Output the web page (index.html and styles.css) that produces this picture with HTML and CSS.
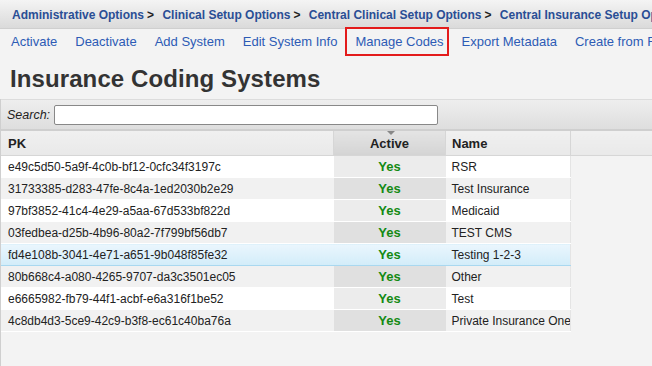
FILE: index.html
```html
<!DOCTYPE html>
<html lang="en">
<head>
    <meta charset="UTF-8">
    <title>Insurance Coding Systems</title>
    <link rel="stylesheet" href="styles.css">
</head>
<body>

    <!-- Breadcrumb -->
    <div class="crumbs">
        <a href="#">Administrative Options</a><span class="sep">&gt;</span>
        <a href="#">Clinical Setup Options</a><span class="sep">&gt;</span>
        <a href="#">Central Clinical Setup Options</a><span class="sep">&gt;</span>
        <a href="#">Central Insurance Setup Options</a>
    </div>

    <!-- Toolbar -->
    <div class="toolbar">
        <a href="#">Activate</a>
        <a href="#">Deactivate</a>
        <a href="#">Add System</a>
        <a href="#">Edit System Info</a>
        <a href="#" class="marked">Manage Codes</a>
        <a href="#">Export Metadata</a>
        <a href="#">Create from File</a>
    </div>

    <h1>Insurance Coding Systems</h1>

    <div class="grid">
        <div class="search">
            <label>Search:</label>
            <input type="text">
        </div>

        <table>
            <thead>
                <tr>
                    <th class="pk">PK</th>
                    <th class="active sorted">Active</th>
                    <th class="name">Name</th>
                    <th class="rest"></th>
                </tr>
            </thead>
            <tbody id="rows"></tbody>
        </table>
    </div>

    <script>
        const systems = [
            { pk: "e49c5d50-5a9f-4c0b-bf12-0cfc34f3197c", name: "RSR" },
            { pk: "31733385-d283-47fe-8c4a-1ed2030b2e29", name: "Test Insurance" },
            { pk: "97bf3852-41c4-4e29-a5aa-67d533bf822d", name: "Medicaid" },
            { pk: "03fedbea-d25b-4b96-80a2-7f799bf56db7", name: "TEST CMS" },
            { pk: "fd4e108b-3041-4e71-a651-9b048f85fe32", name: "Testing 1-2-3", selected: true },
            { pk: "80b668c4-a080-4265-9707-da3c3501ec05", name: "Other" },
            { pk: "e6665982-fb79-44f1-acbf-e6a316f1be52", name: "Test" },
            { pk: "4c8db4d3-5ce9-42c9-b3f8-ec61c40ba76a", name: "Private Insurance One" }
        ];

        const rows = document.getElementById("rows");
        systems.forEach((s, i) => {
            let tr = document.createElement("tr");
            tr.className = (i % 2 === 0 ? "odd" : "even") + (s.selected ? " selected" : "");
            tr.innerHTML = `<td class="pk">${s.pk}</td><td class="active">Yes</td><td class="name">${s.name}</td>`;
            rows.appendChild(tr);
        });
    </script>

</body>
</html>
```

FILE: styles.css
```css
html, body {
    height: 100%;
}
body {
    margin: 0;
    font-family: "Liberation Sans", Arial, sans-serif;
    background-color: #f3f3f3;
    color: #222;
    overflow: hidden;
    display: flex;
    flex-direction: column;
}
a {
    text-decoration: none;
}
.crumbs {
    height: 28px;
    line-height: 30px;
    padding-left: 12px;
    white-space: nowrap;
    overflow: hidden;
    background: linear-gradient(#f4f4f4, #dadada);
    border-bottom: 1px solid #cfcfcf;
    font-size: 12px;
    font-weight: bold;
}
.crumbs a {
    color: #2a4e95;
}
.crumbs .sep {
    color: #222;
    margin: 0 5px 0 3px;
}
.toolbar {
    height: 25px;
    display: flex;
    align-items: center;
    gap: 18px;
    white-space: nowrap;
    padding-left: 11px;
    font-size: 13px;
}
.toolbar a {
    color: #2d5bb5;
}
.toolbar a.marked {
    border: 2px solid #e31b1b;
    padding: 5px 3px 5px 8px;
    margin: -1px -5px 0 -10px;
}
h1 {
    margin: 0;
    padding: 11px 0 0 10px;
    height: 34px;
    font-size: 24px;
    color: #333;
    letter-spacing: 0.1px;
}
.grid {
    flex: 1;
    border-left: 1px solid #cfcfcf;
}
.search {
    height: 29px;
    display: flex;
    align-items: center;
    background: linear-gradient(#eeeeee, #dedede);
    border-top: 1px solid #dcdcdc;
    border-bottom: 2px solid #cfcfcf;
    font-size: 12.5px;
}
.search label {
    font-style: italic;
    color: #222;
    margin: 0 4px 0 6px;
}
.search input {
    width: 380px;
    height: 16px;
    padding: 1px;
    border: 1px solid #888;
    border-radius: 2px;
    background: white;
}
table {
    border-collapse: collapse;
    table-layout: fixed;
    width: 651px;
    font-size: 12px;
}
th {
    height: 24px;
    text-align: left;
    font-weight: bold;
    font-size: 13px;
    background: linear-gradient(#f0f0f0, #e9e9e9);
    border-right: 1px solid #d6d6d6;
    border-bottom: 1px solid #d6d6d6;
    padding: 0;
}
th.pk {
    width: 325px;
    padding-left: 7px;
}
th.active {
    width: 111px;
    text-align: center;
    position: relative;
}
th.sorted {
    background: linear-gradient(#e4e4e4, #d4d4d4);
}
th.sorted::before {
    content: "";
    position: absolute;
    top: 0;
    left: 53px;
    border-left: 4px solid transparent;
    border-right: 4px solid transparent;
    border-top: 4px solid #888;
}
th.name {
    width: 118px;
    padding-left: 6px;
}
th.rest {
    border-right: none;
}
td {
    height: 21px;
    padding: 0;
    white-space: nowrap;
    overflow: hidden;
    border-bottom: 1px solid #fff;
}
td.pk {
    padding-left: 7px;
}
td.active {
    text-align: center;
    font-weight: bold;
    color: #138a13;
    font-size: 13px;
}
td.name {
    padding-left: 6px;
    border-right: 1px solid #e4e4e4;
}
tr.odd td {
    background-color: #ffffff;
}
tr.even td {
    background-color: #f1f1f1;
}
tr.odd td.active {
    background-color: #ececec;
}
tr.even td.active {
    background-color: #e0e0e0;
}
tr.selected td,
tr.selected td.active {
    background: linear-gradient(#eaf6fd, #d2ecf9);
    border-top: 1px solid #a9d8f0;
    border-bottom: 1px solid #a9d8f0;
}
```
